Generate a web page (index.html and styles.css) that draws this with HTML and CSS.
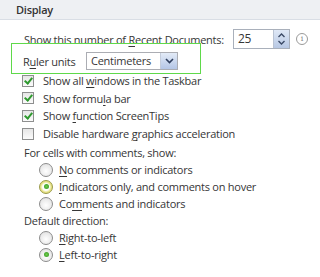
FILE: index.html
```html
<!DOCTYPE html>
<html lang="en">
<head>
    <meta charset="UTF-8">
    <link rel="stylesheet" href="styles.css">
    <title>Display</title>
</head>
<body>
    <div class="section-title">Display</div>

    <div class="row recent-row">
        <span class="recent-label">Show this number of <u>R</u>ecent Documents:</span>
        <div class="spin-box">
            <span class="spin-value">25</span>
            <span class="spin-btn">
                <svg width="9" height="14" viewBox="0 0 9 14">
                    <path d="M1.5 5 L4.5 2 L7.5 5" fill="none" stroke="#3b4a66" stroke-width="1.4"/>
                    <path d="M1.5 9 L4.5 12 L7.5 9" fill="none" stroke="#3b4a66" stroke-width="1.4"/>
                </svg>
            </span>
        </div>
        <span class="info-icon">i</span>
    </div>

    <div class="row ruler-row">
        <span class="ruler-label">R<u>u</u>ler units</span>
        <div class="dropdown">
            <span class="dropdown-value">Centimeters</span>
            <span class="dropdown-btn">
                <svg width="9" height="6" viewBox="0 0 9 6">
                    <path d="M1 1 L4.5 4.5 L8 1" fill="none" stroke="#2f3f5e" stroke-width="1.6"/>
                </svg>
            </span>
        </div>
        <div class="highlight"></div>
    </div>

    <div class="row check-row"><span class="checkbox checked"></span><span>Show all <u>w</u>indows in the Taskbar</span></div>
    <div class="row check-row"><span class="checkbox checked"></span><span>Show formu<u>l</u>a bar</span></div>
    <div class="row check-row"><span class="checkbox checked"></span><span>Show <u>f</u>unction ScreenTips</span></div>
    <div class="row check-row"><span class="checkbox"></span><span>Disable hardware <u>g</u>raphics acceleration</span></div>

    <div class="row group-label first-group">For cells with comments, show:</div>
    <div class="row radio-row"><span class="radio"></span><span><u>N</u>o comments or indicators</span></div>
    <div class="row radio-row"><span class="radio selected hover"></span><span><u>I</u>ndicators only, and comments on hover</span></div>
    <div class="row radio-row"><span class="radio"></span><span>Co<u>m</u>ments and indicators</span></div>

    <div class="row group-label">Default direction:</div>
    <div class="row radio-row"><span class="radio"></span><span><u>R</u>ight-to-left</span></div>
    <div class="row radio-row"><span class="radio selected"></span><span><u>L</u>eft-to-right</span></div>
</body>
</html>
```

FILE: styles.css
```css
body {
    margin: 0;
    font-family: "Open Sans", "Noto Sans", sans-serif;
    font-size: 11px;
    letter-spacing: -0.25px;
    color: #363636;
    background: #fff;
}

u {
    text-decoration-thickness: 1px;
    text-underline-offset: 2px;
}

.section-title {
    height: 19px;
    line-height: 20px;
    padding-left: 16px;
    font-weight: 600;
    color: #333;
    background: #eef0f3;
    border-bottom: 1px solid #d9dee5;
}

.row {
    display: flex;
    align-items: center;
    white-space: nowrap;
}

.recent-row {
    height: 20px;
    margin-top: 9px;
    padding-left: 24px;
}

.recent-label {
    width: 209px;
}

.spin-box {
    display: flex;
    align-items: stretch;
    width: 55px;
    height: 18px;
    border: 1px solid #a9b0bb;
}

.spin-value {
    flex: 1;
    padding-left: 4px;
    line-height: 18px;
    font-size: 12px;
}

.spin-btn {
    width: 15px;
    display: flex;
    align-items: center;
    justify-content: center;
    background: linear-gradient(#dfe8f6, #b7c8e4);
    border-left: 1px solid #b9c3d3;
}

.info-icon {
    width: 10px;
    height: 10px;
    margin-left: 6px;
    border: 1px solid #9a9a9a;
    border-radius: 50%;
    font-size: 8px;
    line-height: 10px;
    text-align: center;
    color: #888;
    letter-spacing: 0;
    font-family: "DejaVu Serif", serif;
}

.ruler-row {
    position: relative;
    height: 20px;
    margin-top: 2px;
    padding-left: 23px;
}

.ruler-label {
    width: 63px;
}

.dropdown {
    display: flex;
    align-items: stretch;
    width: 90px;
    height: 16px;
    border: 1px solid #abadb3;
}

.dropdown-value {
    flex: 1;
    padding-left: 4px;
    line-height: 16px;
}

.dropdown-btn {
    width: 16px;
    display: flex;
    align-items: center;
    justify-content: center;
    background: linear-gradient(#e3ebf7, #b4c6e6);
    border-left: 1px solid #c4cddc;
}

.highlight {
    position: absolute;
    left: 11px;
    top: -8px;
    width: 188px;
    height: 29px;
    border: 1px solid #5fd94a;
}

.check-row {
    height: 17.6px;
    padding-left: 22px;
}

.ruler-row + .check-row {
    margin-top: 1px;
}

.checkbox {
    position: relative;
    width: 10px;
    height: 10px;
    margin-right: 9px;
    border: 1px solid #8e8f8f;
    background: linear-gradient(#e6e6e6, #fbfbfb);
}

.checkbox.checked::after {
    content: "";
    position: absolute;
    left: 3px;
    top: 0px;
    width: 3px;
    height: 6px;
    border: solid #2f9a2f;
    border-width: 0 2px 2px 0;
    transform: rotate(40deg);
}

.group-label {
    height: 17px;
    padding-left: 24px;
}

.first-group {
    margin-top: 2px;
}

.radio-row {
    height: 17px;
    padding-left: 39px;
}

.radio {
    position: relative;
    width: 12px;
    height: 12px;
    margin-right: 6px;
    border: 1px solid #8c8c8c;
    border-radius: 50%;
    background: radial-gradient(circle at 50% 60%, #ffffff, #dcdcdc);
}

.radio.selected::after {
    content: "";
    position: absolute;
    left: 3.5px;
    top: 3.5px;
    width: 5px;
    height: 5px;
    border-radius: 50%;
    background: radial-gradient(circle, #6fcf4a, #2f8f22);
}

.radio.hover {
    border-color: #9a9a4a;
    background: radial-gradient(circle, #ffffff 40%, #e9e58a 60%, #d6cf6a);
}
```
